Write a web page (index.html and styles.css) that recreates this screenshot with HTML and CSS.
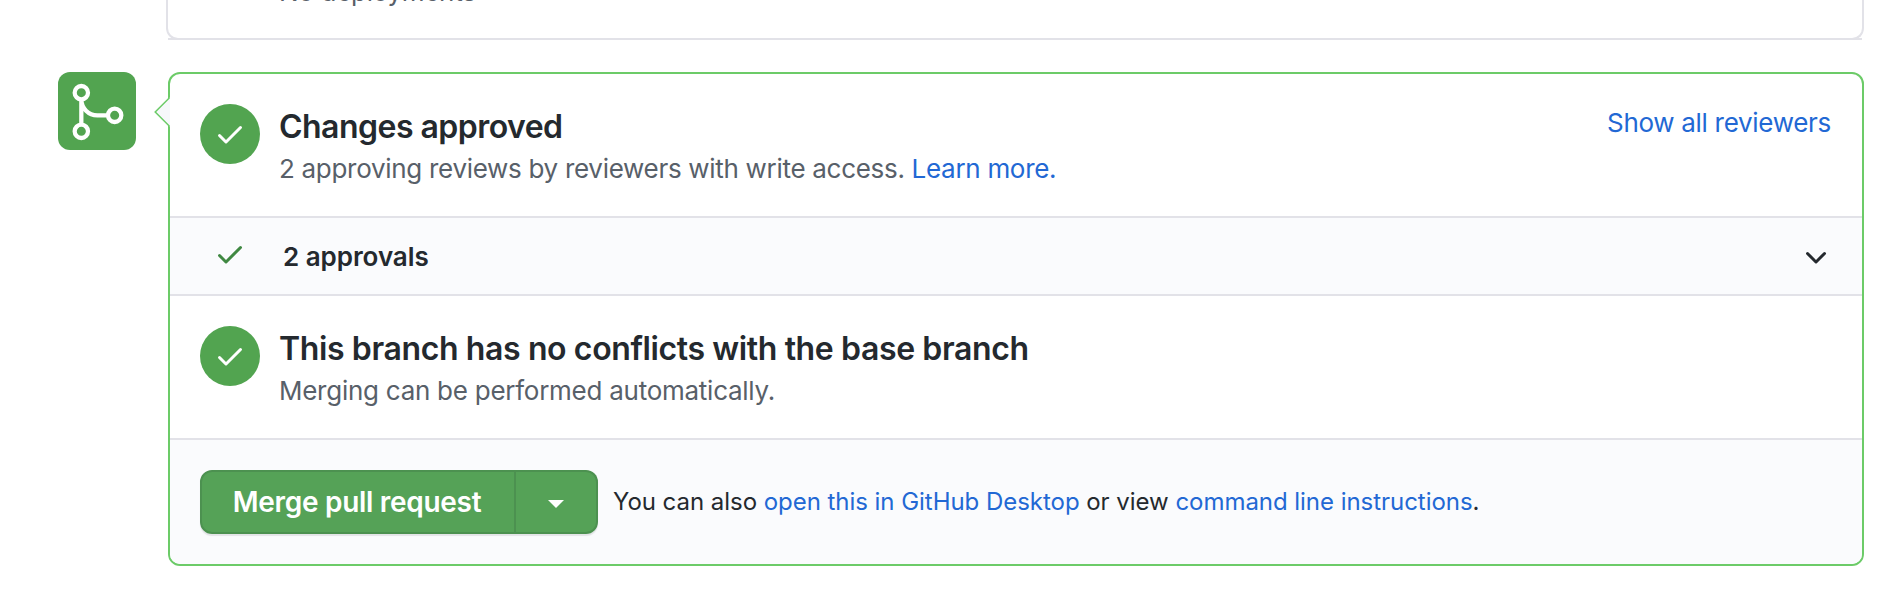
FILE: index.html
```html
<!DOCTYPE html>
<html lang="en">
<head>
<meta charset="utf-8">
<title>Merge pull request</title>
<link rel="stylesheet" href="styles.css">
</head>
<body>
<div class="page">
  <section class="deployments"><p class="muted deployments-text">No deployments</p></section>
  <div class="deployments-rule"></div>
  <div class="merge-area">
    <div class="merge-badge">
      <svg width="64" height="64" viewBox="0 0 24 24" fill="none" stroke="#fff" stroke-width="1.6">
        <circle cx="5.75" cy="4.75" r="2.5"/>
        <circle cx="5.75" cy="19.25" r="2.5"/>
        <circle cx="18.25" cy="13.25" r="2.5"/>
        <path d="M5.75 7.25v9.5M5.75 7.25a6 6 0 0 0 6 6h4"/>
      </svg>
    </div>
    <div class="panel">
      <svg class="pointer" width="16" height="30" viewBox="0 0 16 30"><path d="M16 .5 15 1 1.2 15 15 29 16 29.5z" fill="#f6f8fa"/><path d="M15.5 .7 1.2 15 15.5 29.3" fill="none" stroke="#6ccb68" stroke-width="1.5"/></svg>
      <div class="status">
        <span class="circle"><svg width="32" height="32" viewBox="0 0 16 16"><path d="M13.78 4.22a.75.75 0 010 1.06l-7.25 7.25a.75.75 0 01-1.06 0L2.22 9.28a.75.75 0 011.06-1.06L6 10.94l6.72-6.72a.75.75 0 011.06 0z"/></svg></span>
        <div class="status-body">
          <h3 class="title-approved">Changes approved</h3>
          <p class="muted">2 approving reviews by reviewers with write access. <a>Learn more.</a></p>
        </div>
        <a class="reviewers">Show all reviewers</a>
      </div>
      <div class="approvals">
        <svg class="tick" width="32" height="32" viewBox="0 0 16 16"><path d="M13.78 4.22a.75.75 0 010 1.06l-7.25 7.25a.75.75 0 01-1.06 0L2.22 9.28a.75.75 0 011.06-1.06L6 10.94l6.72-6.72a.75.75 0 011.06 0z"/></svg>
        <strong class="approvals-label">2 approvals</strong>
        <svg class="chevron" width="32" height="32" viewBox="0 0 16 16"><path d="M12.78 6.22a.75.75 0 010 1.06l-4.25 4.25a.75.75 0 01-1.06 0L3.22 7.28a.75.75 0 011.06-1.06L8 9.94l3.72-3.72a.75.75 0 011.06 0z"/></svg>
      </div>
      <div class="status">
        <span class="circle"><svg width="32" height="32" viewBox="0 0 16 16"><path d="M13.78 4.22a.75.75 0 010 1.06l-7.25 7.25a.75.75 0 01-1.06 0L2.22 9.28a.75.75 0 011.06-1.06L6 10.94l6.72-6.72a.75.75 0 011.06 0z"/></svg></span>
        <div class="status-body">
          <h3>This branch has no conflicts with the base branch</h3>
          <p class="muted merging-text">Merging can be performed automatically.</p>
        </div>
      </div>
      <div class="actions">
        <div class="button-group">
          <button class="btn merge-btn">Merge pull request</button>
          <button class="btn caret-btn" aria-label="Select merge method"><span class="caret"></span></button>
        </div>
        <p class="hint">You can also <a>open this in GitHub Desktop</a> or view <a>command line instructions</a>.</p>
      </div>
    </div>
  </div>
</div>
</body>
</html>
```
FILE: styles.css
```css
* { box-sizing: border-box; }
body {
  margin: 0;
  background: #fff;
  color: #24292e;
  font-family: Inter, "Liberation Sans", sans-serif;
  white-space: nowrap;
  overflow: hidden;
}
h3, p { margin: 0; }
svg { display: block; }
a { color: #2268d4; text-decoration: none; }

.page { padding: 0 37px 0 58px; }
.deployments {
  display: flex;
  align-items: flex-start;
  height: 40px;
  margin-left: 108px;
  border: 2px solid #e2e2e8;
  border-top: 0;
  border-radius: 0 0 12px 12px;
  padding-left: 111px;
}
.deployments-text { margin-top: -29px; }
.deployments-rule { height: 2px; margin: -2px 2px 0 110px; background: #e2e2e8; }
.muted { color: #586069; font-size: 26px; line-height: 42px; letter-spacing: -0.3px; }
.merging-text { letter-spacing: -0.26px; }

.merge-area { display: flex; align-items: flex-start; gap: 32px; margin-top: 32px; }
.merge-badge {
  width: 78px;
  height: 78px;
  flex: none;
  padding: 8px;
  border-radius: 12px;
  background: #52a450;
}
.panel {
  position: relative;
  flex: 1;
  border: 2px solid #6ccb68;
  border-radius: 12px;
}
.pointer { position: absolute; left: -16px; top: 23px; }

.status { display: flex; height: 144px; padding: 30px 31px 0 30px; border-bottom: 2px solid #e2e2e8; }
.circle {
  display: flex;
  flex: none;
  align-items: center;
  justify-content: center;
  width: 60px;
  height: 60px;
  border-radius: 50%;
  background: #52a450;
  fill: #fff;
}
.status-body { flex: 1; padding-left: 19px; }
h3 { height: 44px; font-size: 32px; line-height: 46px; font-weight: 600; letter-spacing: -0.38px; }
.title-approved { letter-spacing: -0.53px; }
.reviewers { font-size: 26px; line-height: 38px; letter-spacing: -0.3px; }

.approvals {
  display: flex;
  align-items: center;
  height: 78px;
  padding: 0 30px 2px 44px;
  border-bottom: 2px solid #e2e2e8;
  background: #fafbfd;
}
.tick { fill: #3f8842; margin-top: -2px; }
.approvals-label { flex: 1; margin-left: 37px; padding-top: 2px; font-size: 26px; font-weight: 600; letter-spacing: -0.05px; }
.chevron { fill: #24292e; margin-top: 2px; }

.actions {
  display: flex;
  align-items: center;
  height: 124px;
  padding-left: 30px;
  background: #fafbfd;
  border-radius: 0 0 10px 10px;
}
.button-group { display: flex; border-radius: 12px; box-shadow: 0 2px 1px rgba(27, 31, 35, .1); }
.btn {
  height: 64px;
  margin: 0;
  padding: 0;
  border: 2px solid #4c9150;
  background: #55a257;
  color: #fff;
  font: 600 28px Inter, "Liberation Sans", sans-serif;
  letter-spacing: -0.3px;
}
.merge-btn { width: 316px; padding-right: 2px; border-radius: 12px 0 0 12px; }
.caret-btn {
  display: flex;
  align-items: center;
  justify-content: center;
  width: 82px;
  border-left: 0;
  border-radius: 0 12px 12px 0;
}
.caret { border: 8px solid transparent; border-top-color: #fff; border-bottom: 0; margin-top: 4px; }
.hint { margin-left: 15px; padding-bottom: 2px; font-size: 24px; letter-spacing: -0.04px; }
```
